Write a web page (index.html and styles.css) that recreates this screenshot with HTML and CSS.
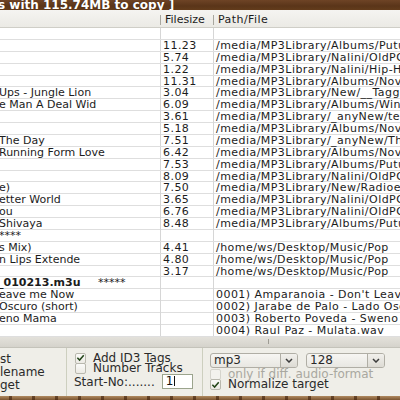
FILE: index.html
```html
<!DOCTYPE html>
<html lang="en">
<head>
	<meta charset="UTF-8">
	<title>MP3 copy</title>
	<link rel="stylesheet" href="styles.css">
</head>

<body>
	<div class="titlebar">s with 115.74MB to copy ]</div>

	<div class="list">
		<div class="head">
			<div></div>
			<div class="hcol">Filesize</div>
			<div class="hcol wide">Path/File</div>
		</div>
		<div class="row"><div class="name"></div><div class="size"></div><div class="path"></div></div>
		<div class="row"><div class="name"></div><div class="size">11.23</div><div class="path">/media/MP3Library/Albums/Putumayo</div></div>
		<div class="row"><div class="name"></div><div class="size">5.74</div><div class="path">/media/MP3Library/Nalini/OldPC</div></div>
		<div class="row"><div class="name"></div><div class="size">1.22</div><div class="path">/media/MP3Library/Nalini/Hip-Hop</div></div>
		<div class="row"><div class="name"></div><div class="size">11.31</div><div class="path">/media/MP3Library/Albums/Nova</div></div>
		<div class="row"><div class="name">Ups - Jungle Lion</div><div class="size">3.04</div><div class="path">/media/MP3Library/New/__Tagged</div></div>
		<div class="row"><div class="name">e Man A Deal Wid</div><div class="size">6.09</div><div class="path">/media/MP3Library/Albums/Winter</div></div>
		<div class="row"><div class="name"></div><div class="size">3.61</div><div class="path">/media/MP3Library/_anyNew/test</div></div>
		<div class="row"><div class="name"></div><div class="size">5.18</div><div class="path">/media/MP3Library/Albums/Nova</div></div>
		<div class="row"><div class="name">The Day</div><div class="size">7.51</div><div class="path">/media/MP3Library/_anyNew/The</div></div>
		<div class="row"><div class="name">Running Form Love</div><div class="size">6.42</div><div class="path">/media/MP3Library/Albums/Nova</div></div>
		<div class="row"><div class="name"></div><div class="size">7.53</div><div class="path">/media/MP3Library/Albums/Putumayo</div></div>
		<div class="row"><div class="name"></div><div class="size">8.09</div><div class="path">/media/MP3Library/Nalini/OldPC</div></div>
		<div class="row"><div class="name">e)</div><div class="size">7.50</div><div class="path">/media/MP3Library/New/Radioe</div></div>
		<div class="row"><div class="name">etter World</div><div class="size">3.65</div><div class="path">/media/MP3Library/Nalini/OldPC</div></div>
		<div class="row"><div class="name">ou</div><div class="size">6.76</div><div class="path">/media/MP3Library/Nalini/OldPC</div></div>
		<div class="row"><div class="name">Shivaya</div><div class="size">8.48</div><div class="path">/media/MP3Library/Albums/Putumayo</div></div>
		<div class="row"><div class="name">****</div><div class="size"></div><div class="path"></div></div>
		<div class="row"><div class="name">s Mix)</div><div class="size">4.41</div><div class="path">/home/ws/Desktop/Music/Pop</div></div>
		<div class="row"><div class="name">n Lips Extende</div><div class="size">4.80</div><div class="path">/home/ws/Desktop/Music/Pop</div></div>
		<div class="row"><div class="name"></div><div class="size">3.17</div><div class="path">/home/ws/Desktop/Music/Pop</div></div>
		<div class="row"><div class="name list-title"><b>_010213.m3u</b>&nbsp;&nbsp;&nbsp;&nbsp;&nbsp;*****</div><div class="size"></div><div class="path"></div></div>
		<div class="row"><div class="name">eave me Now</div><div class="size"></div><div class="path">0001) Amparanoia - Don't Leave me Now</div></div>
		<div class="row"><div class="name">Oscuro (short)</div><div class="size"></div><div class="path">0002) Jarabe de Palo - Lado Oscuro</div></div>
		<div class="row"><div class="name">eno Mama</div><div class="size"></div><div class="path">0003) Roberto Poveda - Sweno Mama</div></div>
		<div class="row"><div class="name"></div><div class="size"></div><div class="path">0004) Raul Paz - Mulata.wav</div></div>
	</div>

	<div class="handle"><span class="grip"></span></div>

	<div class="options">
		<div class="opt-left">
			<div>st</div>
			<div>lename</div>
			<div>get</div>
		</div>

		<div class="opt-mid">
			<div class="check-row">
				<span class="box"><svg width="10" height="10" viewBox="0 0 10 10"><path d="M1.5 4.8 L4 7.3 L8.6 2" fill="none" stroke="#24461a" stroke-width="1.7"/></svg></span>
				Add ID3 Tags
			</div>
			<div class="check-row">
				<span class="box"></span>
				Number Tracks
			</div>
			<div class="start-row">
				Start-No:.......
				<div class="entry">1<span class="caret"></span></div>
			</div>
		</div>

		<div class="opt-right">
			<div class="combos">
				<div class="combo wide">
					<span class="combo-text">mp3</span>
					<span class="combo-btn"><svg width="8" height="5" viewBox="0 0 8 5"><path d="M1 1 L4 4 L7 1" fill="none" stroke="#3c3c3c" stroke-width="1.5"/></svg></span>
				</div>
				<div class="combo">
					<span class="combo-text">128</span>
					<span class="combo-btn"><svg width="8" height="5" viewBox="0 0 8 5"><path d="M1 1 L4 4 L7 1" fill="none" stroke="#3c3c3c" stroke-width="1.5"/></svg></span>
				</div>
			</div>
			<div class="check-row disabled">
				<span class="box"></span>
				only if diff. audio-format
			</div>
			<div class="check-row">
				<span class="box"><svg width="10" height="10" viewBox="0 0 10 10"><path d="M1.5 4.8 L4 7.3 L8.6 2" fill="none" stroke="#24461a" stroke-width="1.7"/></svg></span>
				Normalize target
			</div>
		</div>
	</div>

	<div class="bottom-edge"></div>
</body>

</html>
```

FILE: styles.css
```css
body {
	margin: 0;
	width: 400px;
	height: 400px;
	overflow: hidden;
	display: flex;
	flex-direction: column;
	font-family: "DejaVu Sans", "Liberation Sans", sans-serif;
	background: #edece6;
	color: #1c1c1c;
}

/*窗口标题栏*/
.titlebar {
	flex: none;
	height: 10px;
	background: linear-gradient(#6e4426, #5a3519 60%, #633c1c);
	color: #fff;
	font-size: 12px;
	font-weight: bold;
	line-height: 10px;
	white-space: nowrap;
	overflow: hidden;
	text-indent: -2px;
	text-shadow: 0 0 1px #3b1f08;
}

/*文件列表*/
.list {
	flex: none;
	background: #fff;
}
.head,
.row {
	display: grid;
	grid-template-columns: 160px 53px minmax(0, 1fr);
	box-sizing: border-box;
	font-size: 11px;
	white-space: nowrap;
}
.head {
	height: 18px;
	background: linear-gradient(#f5f4f1, #ebeae5);
	border-bottom: 1px solid #cfcec7;
	line-height: 16px;
	padding-top: 2px;
}
.hcol {
	display: flex;
	align-items: center;
}
.hcol::before {
	content: "";
	width: 1px;
	height: 10px;
	margin-right: 4px;
	background: #a8a79f;
}
.hcol.wide {
	letter-spacing: 0.45px;
}
.row {
	height: 11.88px;
	line-height: 11.5px;
	border-bottom: 1px solid #dedede;
}
.row > div {
	overflow-x: clip;
}
.name {
	text-indent: -1px;
}
.size,
.path {
	border-left: 1px solid #d6d6d6;
	padding-left: 2px;
	letter-spacing: 0.45px;
}
.list-title {
	text-indent: -2px;
}

/*分隔条*/
.handle {
	flex: none;
	height: 10px;
	background: linear-gradient(#e3e1db, #d5d3cc);
	display: flex;
	align-items: center;
}
.grip {
	width: 1px;
	height: 5px;
	margin-left: 268px;
	background: #9e9c94;
}

/*选项面板*/
.options {
	flex: none;
	height: 49px;
	box-sizing: border-box;
	display: flex;
	border-top: 1px solid #c4c3ba;
	background: #efeee8;
	font-size: 12px;
	color: #2a2a2a;
}
.opt-left {
	width: 67px;
	box-sizing: border-box;
	border-right: 1px solid #cdcfbf;
	padding-top: 5px;
	line-height: 13px;
	white-space: nowrap;
}
.opt-mid {
	width: 136px;
	box-sizing: border-box;
	border-right: 1px solid #cdcfbf;
	padding: 5px 0 0 8px;
}
.opt-right {
	flex: 1;
	padding: 5px 0 0 7px;
}
.check-row {
	display: flex;
	align-items: center;
	height: 10.5px;
	line-height: 10.5px;
	white-space: nowrap;
}
.box {
	width: 9px;
	height: 9px;
	margin-right: 7px;
	border: 1px solid #b9b8ae;
	border-radius: 2px;
	background: linear-gradient(#fbfbf9, #eceae4);
	display: flex;
	align-items: center;
	justify-content: center;
	flex: none;
}
.disabled {
	color: #a9a8a0;
}
.disabled .box {
	border-color: #d5d4cc;
	background: #f3f2ed;
}
.start-row {
	display: flex;
	align-items: flex-end;
	height: 15px;
	margin-left: -1px;
	line-height: 13px;
	white-space: nowrap;
}
.entry {
	width: 31px;
	height: 15px;
	box-sizing: border-box;
	margin-left: 7px;
	border: 1px solid #9ba48d;
	background: #fff;
	padding-left: 3px;
	line-height: 13px;
	color: #111;
	display: flex;
	align-items: center;
}
.caret {
	width: 1px;
	height: 10px;
	margin-left: 1px;
	background: #111;
}

/*下拉框*/
.combos {
	display: flex;
	gap: 8px;
	margin-bottom: 1px;
}
.combo {
	width: 79px;
	height: 15px;
	box-sizing: border-box;
	display: flex;
	border: 1px solid #b0aea5;
	border-radius: 3px;
	background: linear-gradient(#f7f6f3, #e8e7e2);
}
.combo.wide {
	width: 88px;
}
.combo-text {
	flex: 1;
	padding-left: 3px;
	line-height: 13px;
}
.combo-btn {
	width: 16px;
	border-left: 1px solid #b0aea5;
	border-radius: 0 2px 2px 0;
	background: linear-gradient(#f1f0ec, #dddbd4);
	display: flex;
	align-items: center;
	justify-content: center;
}

/*底部木纹*/
.bottom-edge {
	flex: none;
	height: 4px;
	background:
		repeating-linear-gradient(90deg, transparent 0 9px, rgba(60, 30, 10, .6) 9px 12px, transparent 12px 23px),
		linear-gradient(#b08a60, #7a5431);
}
```
